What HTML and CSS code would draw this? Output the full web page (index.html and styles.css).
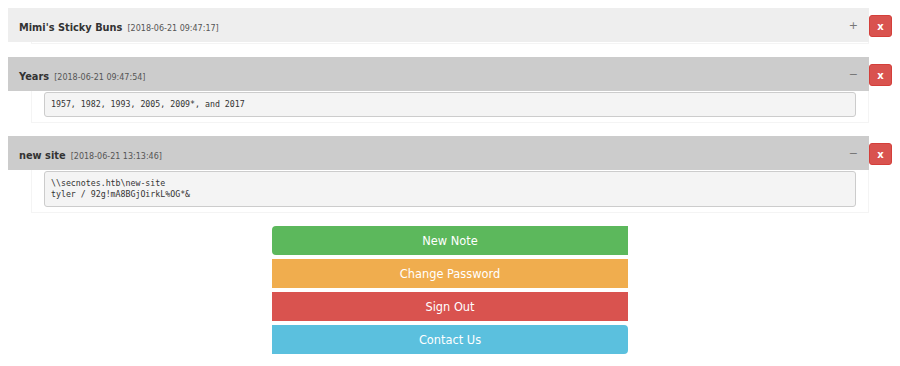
FILE: index.html
```html
<!DOCTYPE html>
<html lang="en">
<head>
  <meta charset="UTF-8" />
  <title>Secure Notes</title>
  <link rel="stylesheet" href="styles.css">
</head>
<body>
  <div class="notes">
    <div class="note">
      <div class="panel">
        <div class="panel-heading">
          <span class="panel-title"><b>Mimi's Sticky Buns</b> <small>[2018-06-21 09:47:17]</small></span>
          <span class="toggle">+</span>
        </div>
        <div class="panel-body collapsed"></div>
      </div>
      <button class="btn-delete">x</button>
    </div>

    <div class="note open">
      <div class="panel">
        <div class="panel-heading">
          <span class="panel-title"><b>Years</b> <small>[2018-06-21 09:47:54]</small></span>
          <span class="toggle">&minus;</span>
        </div>
        <div class="panel-body">
          <pre>1957, 1982, 1993, 2005, 2009*, and 2017</pre>
        </div>
      </div>
      <button class="btn-delete">x</button>
    </div>

    <div class="note open">
      <div class="panel">
        <div class="panel-heading">
          <span class="panel-title"><b>new site</b> <small>[2018-06-21 13:13:46]</small></span>
          <span class="toggle">&minus;</span>
        </div>
        <div class="panel-body">
          <pre>\\secnotes.htb\new-site
tyler / 92g!mA8BGjOirkL%OG*&amp;</pre>
        </div>
      </div>
      <button class="btn-delete">x</button>
    </div>
  </div>

  <div class="actions">
    <a class="btn btn-success first" href="#">New Note</a>
    <a class="btn btn-warning" href="#">Change Password</a>
    <a class="btn btn-danger" href="#">Sign Out</a>
    <a class="btn btn-info last" href="#">Contact Us</a>
  </div>
</body>
</html>
```

FILE: styles.css
```css
* {
  box-sizing: border-box;
}

body {
  margin: 8px;
  font-family: "DejaVu Sans", sans-serif;
  color: #333;
  background: #fff;
}

.note {
  display: flex;
  align-items: flex-start;
  margin-bottom: 13px;
}

.panel {
  flex: 1;
}

.panel-heading {
  height: 34px;
  display: flex;
  align-items: center;
  justify-content: space-between;
  padding: 0 11px;
  background: #eee;
}

.note.open .panel-heading {
  background: #ccc;
}

.panel-title b {
  font-size: 9.8px;
  font-weight: bold;
  color: #333;
}

.panel-title small {
  font-size: 8px;
  color: #555;
}

.toggle {
  font-size: 11px;
  color: #777;
}

.panel-body {
  margin-left: 23px;
  padding: 1px 12px 5px;
  border: 1px solid #f4f4f4;
  border-top: none;
}

.panel-body.collapsed {
  padding: 1px 0 0;
}

pre {
  margin: 0;
  padding: 6px 6px;
  font-family: "DejaVu Sans Mono", monospace;
  font-size: 8.25px;
  line-height: 11px;
  color: #333;
  background: #f4f4f4;
  border: 1px solid #ccc;
  border-radius: 3px;
}

.btn-delete {
  width: 23px;
  height: 22px;
  margin-top: 7px;
  padding: 0;
  font-family: "DejaVu Sans", sans-serif;
  font-size: 10px;
  font-weight: bold;
  color: #fff;
  background: #d9534f;
  border: 1px solid #d43f3a;
  border-radius: 3px;
}

.actions {
  width: 356px;
  margin: 13px auto 0;
  display: flex;
  flex-direction: column;
  gap: 4px;
}

.btn {
  display: flex;
  align-items: center;
  justify-content: center;
  height: 29px;
  font-size: 11.4px;
  color: #fff;
  text-decoration: none;
}

.btn-success {
  background: #5cb85c;
}

.btn-warning {
  background: #f0ad4e;
}

.btn-danger {
  background: #d9534f;
}

.btn-info {
  background: #5bc0de;
}

.first {
  border-radius: 4px 0 0 4px;
}

.last {
  border-radius: 0 4px 4px 0;
}
```
